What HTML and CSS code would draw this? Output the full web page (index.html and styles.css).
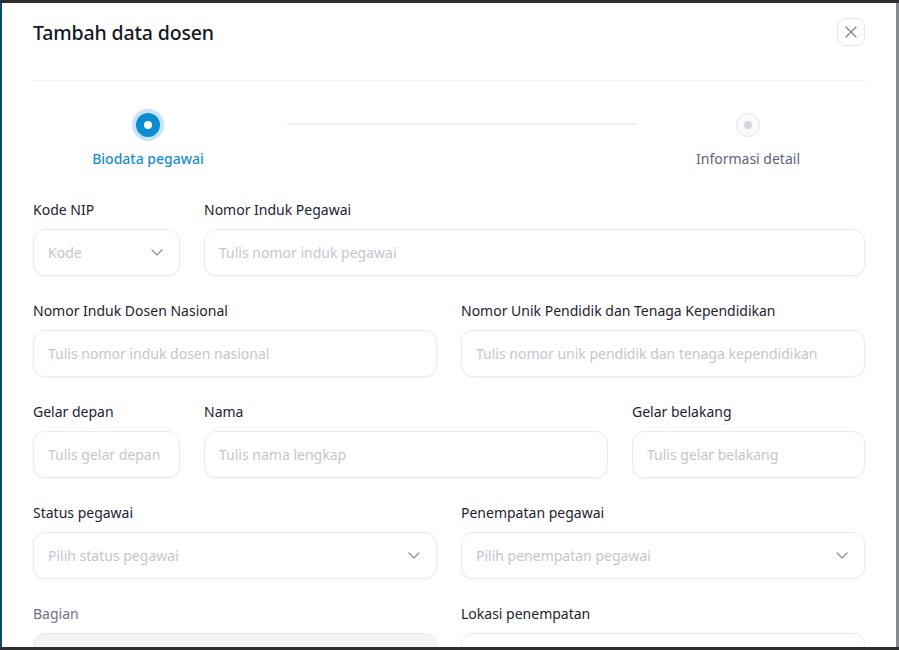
FILE: index.html
```html
<!DOCTYPE html>
<html lang="id">
<head>
<meta charset="utf-8">
<title>Tambah data dosen</title>
<link rel="stylesheet" href="styles.css">
</head>
<body>
<div class="frame">
  <div class="window">
    <div class="modal">
      <div class="modal-header">
        <h1 class="modal-title">Tambah data dosen</h1>
        <button class="close-btn" type="button" aria-label="Tutup">
          <svg width="14" height="14" viewBox="0 0 14 14" fill="none"><path d="M2 2L12 12M12 2L2 12" stroke="#7b8394" stroke-width="1.3" stroke-linecap="round"/></svg>
        </button>
      </div>
      <div class="divider"></div>

      <div class="stepper">
        <div class="step step-first active">
          <span class="step-slot"><span class="step-dot"><span class="step-core"></span></span></span>
          <span class="step-label">Biodata pegawai</span>
        </div>
        <div class="step-line"></div>
        <div class="step step-last">
          <span class="step-slot"><span class="step-dot"><span class="step-core"></span></span></span>
          <span class="step-label">Informasi detail</span>
        </div>
      </div>

      <form class="form">
        <div class="row row-a">
          <div class="field">
            <label class="label">Kode NIP</label>
            <div class="input select"><span class="ph">Kode</span><svg class="chev" width="12" height="7" viewBox="0 0 12 7" fill="none"><path d="M1 1L6 6L11 1" stroke="#8a92a3" stroke-width="1.3" stroke-linecap="round" stroke-linejoin="round"/></svg></div>
          </div>
          <div class="field">
            <label class="label">Nomor Induk Pegawai</label>
            <div class="input"><span class="ph">Tulis nomor induk pegawai</span></div>
          </div>
        </div>

        <div class="row row-b">
          <div class="field">
            <label class="label">Nomor Induk Dosen Nasional</label>
            <div class="input"><span class="ph">Tulis nomor induk dosen nasional</span></div>
          </div>
          <div class="field">
            <label class="label">Nomor Unik Pendidik dan Tenaga Kependidikan</label>
            <div class="input"><span class="ph">Tulis nomor unik pendidik dan tenaga kependidikan</span></div>
          </div>
        </div>

        <div class="row row-c">
          <div class="field">
            <label class="label">Gelar depan</label>
            <div class="input"><span class="ph">Tulis gelar depan</span></div>
          </div>
          <div class="field">
            <label class="label">Nama</label>
            <div class="input"><span class="ph">Tulis nama lengkap</span></div>
          </div>
          <div class="field">
            <label class="label">Gelar belakang</label>
            <div class="input"><span class="ph">Tulis gelar belakang</span></div>
          </div>
        </div>

        <div class="row row-b">
          <div class="field">
            <label class="label">Status pegawai</label>
            <div class="input select"><span class="ph">Pilih status pegawai</span><svg class="chev" width="12" height="7" viewBox="0 0 12 7" fill="none"><path d="M1 1L6 6L11 1" stroke="#8a92a3" stroke-width="1.3" stroke-linecap="round" stroke-linejoin="round"/></svg></div>
          </div>
          <div class="field">
            <label class="label">Penempatan pegawai</label>
            <div class="input select"><span class="ph">Pilih penempatan pegawai</span><svg class="chev" width="12" height="7" viewBox="0 0 12 7" fill="none"><path d="M1 1L6 6L11 1" stroke="#8a92a3" stroke-width="1.3" stroke-linecap="round" stroke-linejoin="round"/></svg></div>
          </div>
        </div>

        <div class="row row-b">
          <div class="field">
            <label class="label muted">Bagian</label>
            <div class="input disabled"></div>
          </div>
          <div class="field">
            <label class="label">Lokasi penempatan</label>
            <div class="input"></div>
          </div>
        </div>
      </form>
    </div>
  </div>
</div>
</body>
</html>
```

FILE: styles.css
```css
* { box-sizing: border-box; }
html, body { margin: 0; padding: 0; }
body {
  background: #2e2e2e;
  font-family: "Noto Sans", "Lato", sans-serif;
  color: #1d2230;
  width: 899px;
  height: 650px;
  overflow: hidden;
}
.frame {
  padding: 3px 0 3px 0;
  height: 650px;
}
.window {
  height: 644px;
  border-left: 2px solid #0c4a6b;
  border-right: 3px solid #86898d;
  background: #ffffff;
  overflow: hidden;
}
.modal {
  padding: 14px 31px 0 31px;
}
.modal-header {
  display: flex;
  align-items: center;
  justify-content: space-between;
  height: 30px;
}
.modal-title {
  margin: 0;
  font-size: 19.5px;
  font-weight: 500;
  color: #141824;
  letter-spacing: -0.15px;
}
.close-btn {
  width: 28px;
  height: 28px;
  border: 1px solid #e6e8ec;
  border-radius: 8px;
  background: #fff;
  display: flex;
  align-items: center;
  justify-content: center;
  padding: 0;
}
.divider {
  height: 1px;
  background: #f0f1f3;
  margin-top: 33px;
}

.stepper {
  display: flex;
  align-items: flex-start;
  margin-top: 28px;
}
.step {
  display: flex;
  flex-direction: column;
  align-items: center;
}
.step-first { width: 230px; }
.step-last { width: 228px; padding-right: 6px; }
.step-slot {
  height: 32px;
  display: flex;
  align-items: center;
  justify-content: center;
}
.step-dot {
  width: 24px;
  height: 24px;
  border-radius: 50%;
  border: 1px solid #e3e5ea;
  background: #f8f9fb;
  display: flex;
  align-items: center;
  justify-content: center;
}
.step-core {
  width: 8px;
  height: 8px;
  border-radius: 50%;
  background: #d5d8de;
}
.step.active .step-dot {
  width: 32px;
  height: 32px;
  border: 4px solid #c7e3f4;
  background: #0a8bd2;
}
.step.active .step-core {
  background: #ffffff;
}
.step-label {
  margin-top: 8px;
  font-size: 14px;
  font-weight: 400;
  color: #5d6577;
  line-height: 20px;
}
.step.active .step-label {
  color: #1a8fd0;
  font-weight: 500;
}
.step-line {
  flex: 1;
  height: 2px;
  background: #eef0f3;
  margin: 14px 0 0 24px;
}

.form {
  margin-top: 31px;
  display: flex;
  flex-direction: column;
  gap: 25px;
}
.row {
  display: grid;
  gap: 24px;
}
.row-a { grid-template-columns: 147px 1fr; }
.row-b { grid-template-columns: 1fr 1fr; }
.row-c { grid-template-columns: 147px 404px 1fr; }
.field {
  display: flex;
  flex-direction: column;
}
.label {
  font-size: 14px;
  line-height: 20px;
  color: #1d2230;
  margin-bottom: 9px;
}
.label.muted { color: #6b7284; }
.input {
  height: 47px;
  flex: none;
  border: 1px solid #e9ebef;
  border-radius: 12px;
  background: #fff;
  box-shadow: 0 1px 2px rgba(20, 30, 50, 0.05);
  display: flex;
  align-items: center;
  justify-content: space-between;
  padding: 0 16px 0 14px;
}
.input.disabled {
  background: #f3f4f6;
}
.ph {
  font-size: 14px;
  color: #c3c7d1;
  white-space: nowrap;
  overflow: hidden;
}
.chev { flex: none; }
```
